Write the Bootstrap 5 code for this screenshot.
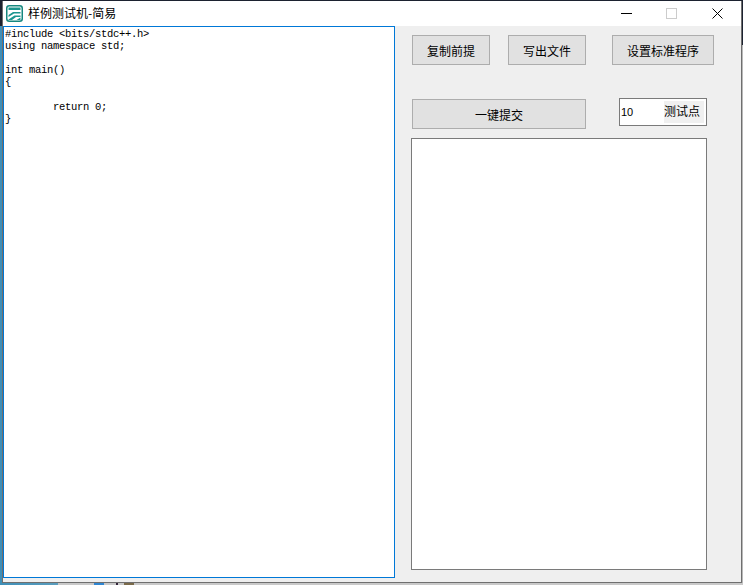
<!DOCTYPE html>
<html lang="zh">
<head>
<meta charset="utf-8">
<title>样例测试机-简易</title>
<link href="https://cdn.jsdelivr.net/npm/bootstrap@5.3.0/dist/css/bootstrap.min.css" rel="stylesheet">
<style>
html,body{height:100%;overflow:hidden}
body{font-family:"Noto Sans CJK SC","Liberation Sans",sans-serif;font-size:12px;color:#000;
  background:
   linear-gradient(#1c2230,#1c2230) left top/100% 1px no-repeat,
   linear-gradient(#8a5a1c,#8a5a1c) 415px top/46px 1px no-repeat,
   linear-gradient(#2f86d2,#2f86d2) 94px bottom/10px 2px no-repeat,
   linear-gradient(#33243a,#33243a) 116px bottom/2px 2px no-repeat,
   linear-gradient(#7a6a4a,#7a6a4a) 124px bottom/10px 2px no-repeat,
   linear-gradient(90deg,#3f8fb8 0,#5a9dbd 58px,#c9c9c9 58px,#c9c9c9 100%) left bottom/100% 2px no-repeat,
   linear-gradient(180deg,#1c2230 0,#1c2230 26px,#3f8fb8 26px) left top/2px 100% no-repeat,
   linear-gradient(180deg,#1c2230 0,#1c2230 45px,#b8b8b8 45px) right top/2px 100% no-repeat,
   #c9c9c9;}
.deskshell{padding:1px 1px 2px 2px;height:585px}
.wnd{width:740px;height:582px;background:#efefef;border:1px solid #6f6f6f;border-top:0;display:flex;flex-direction:column}
.ttl{height:25px;flex:none;background:#fff;padding-left:3px}
.ttl-txt{margin-left:5px;line-height:1;position:relative;top:-1px}
.ctrl{width:45.5px;height:25px;display:flex;align-items:center;justify-content:center}
.ctrlset{margin-right:1px}
.cli{flex:1;min-height:0}
.editor{width:392px;height:552px;flex:none;border:1px solid #0078d7;background:#fff;padding:1px 0 0 1px;margin:0;
  font-family:"Liberation Mono",monospace;font-size:10.5px;line-height:12.1px;letter-spacing:-.3px;tab-size:8;overflow:hidden;color:#000}
.side{padding:9px 0 0 17px;flex:1;min-width:0}
.wbtn{--bs-btn-border-radius:0;--bs-btn-padding-y:0;--bs-btn-padding-x:0;--bs-btn-font-size:12px;--bs-btn-color:#000;--bs-btn-bg:#e1e1e1;--bs-btn-border-color:#adadad;--bs-btn-hover-bg:#e1e1e1;--bs-btn-hover-border-color:#adadad;height:30px;line-height:30px;font-family:inherit}
.w78{width:78px}.w102{width:102px}.w174{width:174px}
.gap18{gap:18px}.ms8{margin-left:8px}
.row2{margin-top:33px}.row2 .wbtn{margin-top:1px}
.tests{margin-left:33px;width:88px;height:28px;border:1px solid #7a7a7a;background:#fff;padding:2px 2px 2px 1px}
.tests input{width:43px;border:0;outline:0;padding:0;background:#fff;font-size:11px;font-family:"Liberation Sans",sans-serif;color:#000}
.tests span{flex:1;background:#f0f0f0;line-height:20px}
.outbox{margin:9px 0 0 -1px;width:296px;height:432px;background:#fff;border:1px solid #7a7a7a}
</style>
</head>
<body>
<div class="deskshell">
<div class="wnd">
  <div class="ttl d-flex align-items-center">
    <svg width="17" height="17" viewBox="0 0 17 17">
      <rect x=".75" y=".75" width="15.5" height="15.5" rx="2.5" fill="#fff" stroke="#16877f" stroke-width="1.5"/>
      <path d="M2.5 2.5h12v2.5h-12z" fill="#1c968f"/>
      <path d="M2.5 10 L7 7 H14.5 V8.5 H8 L2.5 12z M2.5 14.5 L8.5 10.5 H14.5 V12 H10 L6 15 H2.5z M10.5 15 L14.5 12.5 V15z" fill="#1c968f"/>
    </svg>
    <span class="ttl-txt">样例测试机-简易</span>
    <div class="ms-auto d-flex ctrlset">
      <div class="ctrl"><svg width="11" height="11" viewBox="0 0 11 11"><path d="M0 5.5h11" stroke="#000" stroke-width="1"/></svg></div>
      <div class="ctrl"><svg width="11" height="11" viewBox="0 0 11 11"><rect x=".5" y=".5" width="10" height="10" fill="none" stroke="#ccc"/></svg></div>
      <div class="ctrl"><svg width="11" height="11" viewBox="0 0 11 11"><path d="M.5.5l10 10M10.5.5l-10 10" stroke="#000" stroke-width="1"/></svg></div>
    </div>
  </div>
  <div class="cli d-flex">
<pre class="editor">#include &lt;bits/stdc++.h&gt;
using namespace std;

int main()
{

	return 0;
}</pre>
    <div class="side">
      <div class="d-flex gap18">
        <button type="button" class="btn wbtn w78">复制前提</button>
        <button type="button" class="btn wbtn w78">写出文件</button>
        <button type="button" class="btn wbtn w102 ms8">设置标准程序</button>
      </div>
      <div class="d-flex align-items-start row2">
        <button type="button" class="btn wbtn w174">一键提交</button>
        <div class="tests d-flex">
          <input type="text" value="10" aria-label="测试点">
          <span>测试点</span>
        </div>
      </div>
      <div class="outbox"></div>
    </div>
  </div>
</div>
</div>
<script src="https://cdn.jsdelivr.net/npm/bootstrap@5.3.0/dist/js/bootstrap.bundle.min.js"></script>
</body>
</html>
